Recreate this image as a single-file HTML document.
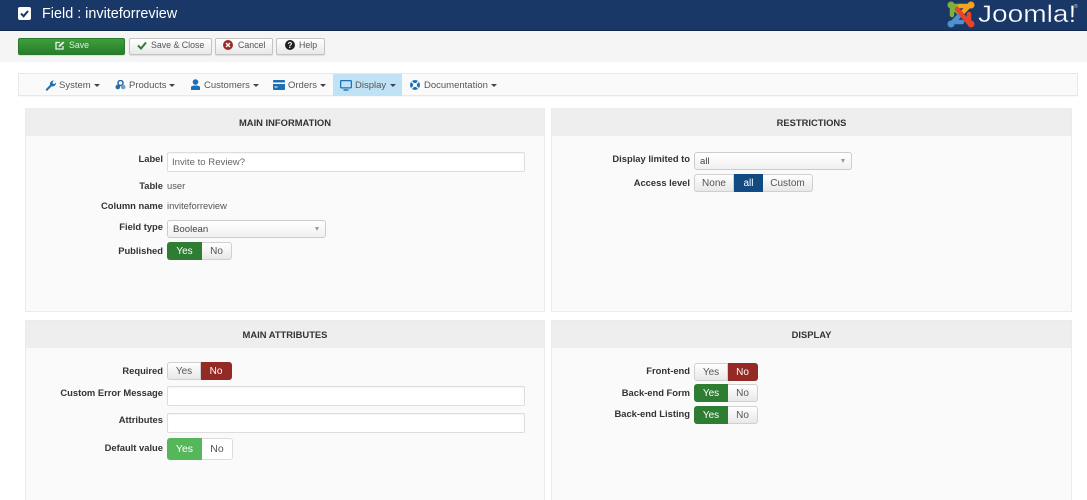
<!DOCTYPE html>
<html><head><meta charset="utf-8"><title>Field : inviteforreview</title>
<style>
html,body{margin:0;padding:0;background:#fff;height:500px;overflow:hidden}
body{width:1087px;position:relative;font-family:"Liberation Sans",sans-serif;font-size:10px;color:#555}
.a{position:absolute;white-space:nowrap}
#hd{left:0;top:0;width:1087px;height:30px;background:#1a3867;border-bottom:1px solid #11294d}
#tb{left:0;top:31px;width:1087px;height:31px;background:#f5f5f5}
.btn{position:absolute;top:38px;height:15px;line-height:15px;border:1px solid #c4c4c4;border-radius:2px;background:linear-gradient(#fff,#e8e8e8);color:#333;font-size:9px;text-align:center;box-shadow:0 1px 1px rgba(0,0,0,.1)}
.bt{position:absolute;top:40px;font-size:8.8px;line-height:11px;color:#555;white-space:nowrap}
#menu{left:18px;top:73px;width:1060px;height:23px;background:#fafafa;border:1px solid #e8e8e8;box-sizing:border-box;box-shadow:0 1px 1px rgba(0,0,0,.04)}
.m{position:absolute;top:80px;font-size:9.5px;line-height:11px;color:#555;white-space:nowrap}
.c{position:absolute;top:84px;width:0;height:0;border-left:3px solid transparent;border-right:3px solid transparent;border-top:3px solid #444}
.ic{position:absolute}
.p{position:absolute;background:#fafafa;border:1px solid #ebebeb;box-sizing:border-box}
.ph{position:absolute;left:0;top:0;right:0;height:27px;background:#eee;text-align:center;line-height:27px;font-size:9.4px;font-weight:bold;color:#333}
.l{position:absolute;font-size:9.4px;font-weight:bold;color:#333;text-align:right;width:160px;line-height:12px;white-space:nowrap}
.t{position:absolute;font-size:9.4px;color:#555;line-height:12px;white-space:nowrap}
.in{position:absolute;left:167px;width:358px;height:20px;box-sizing:border-box;background:#fff;border:1px solid #ddd;border-radius:2px;box-shadow:inset 0 1px 1px rgba(0,0,0,.04);font-size:9.6px;line-height:20px;padding-left:4px;color:#666}
.sel{position:absolute;height:18px;box-sizing:border-box;border:1px solid #ccc;border-radius:3px;background:linear-gradient(#fff,#f0f0f0);font-size:9.6px;line-height:18px;padding-left:5px;color:#444}
.sel:after{content:"";position:absolute;right:6px;top:6px;border-left:2.5px solid transparent;border-right:2.5px solid transparent;border-top:4px solid #999}
.g{position:absolute;height:18px;display:flex;box-sizing:border-box;font-size:10px;line-height:18px;text-align:center}
.g span{display:block;box-sizing:border-box;border:1px solid #d0d0d0;background:linear-gradient(#fff,#e8e8e8);color:#555;height:18px}
.g span:first-child{border-radius:3px 0 0 3px}
.g span:last-child{border-radius:0 3px 3px 0;border-left:0}
.g span.on{border-color:transparent;color:#fff}
.gr{background:#2f7d32!important}.rd{background:#942a25!important}.bl{background:#124a82!important}.lg{background:#55b65a!important}
</style></head><body>
<div class="a" id="hd"></div>
<svg class="ic" style="left:18px;top:7px" width="13" height="13" viewBox="0 0 13 13"><rect width="13" height="13" rx="2" fill="#fff"/><path d="M3 6.500l2.600 2.700L10 4" fill="none" stroke="#1a3867" stroke-width="2"/></svg>
<div class="a" style="left:42px;top:6px;font-size:14.4px;line-height:17px;color:#fff">Field : inviteforreview</div>
<svg class="ic" style="left:947px;top:1px" width="28" height="27" viewBox="0 0 28 27" fill="none" stroke-linecap="round" stroke-width="4.500">
<path d="M6 6l6 6" stroke="#7fb03c"/><path d="M6 5l8 0M5 6l0 8" stroke="#7fb03c"/>
<path d="M22 5l-9 9" stroke="#f5a31d"/><path d="M22 5l-9 0" stroke="#f5a31d"/>
<path d="M6 21l8-8" stroke="#4f91cd"/><path d="M6 21l9 0" stroke="#4f91cd"/>
<path d="M10 8l12 14" stroke="#e8432b"/><path d="M22 21l0-8" stroke="#e8432b"/>
<circle cx="4" cy="4" r="3.500" fill="#7fb03c" stroke="none"/><circle cx="24" cy="4" r="3.500" fill="#f5a31d" stroke="none"/><circle cx="4" cy="23" r="3.500" fill="#4f91cd" stroke="none"/><circle cx="24" cy="23" r="3.500" fill="#e8432b" stroke="none"/></svg>
<div class="a" style="left:978px;top:3px;font-size:24px;line-height:24px;color:#fff;-webkit-text-stroke:.3px #1a3867;transform-origin:0 0;transform:scaleX(1.17)">Joomla!</div>
<div class="a" style="left:1074px;top:4px;font-size:5px;line-height:6px;color:#ccc">®</div>
<div class="a" id="tb"></div>

<div class="btn" style="left:18px;width:105px;background:linear-gradient(#3f9e3a,#287d2b);border-color:#2a7a2c"></div>
<svg class="ic" style="left:55px;top:41px" width="10" height="9" viewBox="0 0 10 9"><path d="M8 5v3H1V1.500h4" fill="none" stroke="#e8f3e8" stroke-width="1.300"/><path d="M3.500 6l.4-1.800L8 0.500l1.400 1.300-4 3.700z" fill="#e8f3e8"/></svg>
<div class="bt" style="left:69px;color:#dcefdc">Save</div>
<div class="btn" style="left:129px;width:81px"></div>
<svg class="ic" style="left:137px;top:41px" width="10" height="9" viewBox="0 0 10 9"><path d="M1 4.500l3 3L9 1.500" fill="none" stroke="#2f7d32" stroke-width="2"/></svg>
<div class="bt" style="left:151px">Save &amp; Close</div>
<div class="btn" style="left:215px;width:56px"></div>
<svg class="ic" style="left:223px;top:40px" width="10" height="10" viewBox="0 0 10 10"><circle cx="5" cy="5" r="5" fill="#9c2a25"/><path d="M3 3l4 4M7 3l-4 4" stroke="#fff" stroke-width="1.400"/></svg>
<div class="bt" style="left:238px">Cancel</div>
<div class="btn" style="left:276px;width:47px"></div>
<svg class="ic" style="left:285px;top:40px" width="10" height="10" viewBox="0 0 10 10"><circle cx="5" cy="5" r="5" fill="#222"/><text x="5" y="8" text-anchor="middle" font-size="8" font-weight="bold" fill="#fff" font-family="Liberation Sans">?</text></svg>
<div class="bt" style="left:299px">Help</div>

<div class="a" id="menu"></div>
<div class="a" style="left:333px;top:74px;width:69px;height:22px;background:#bfe2f5"></div>
<svg class="ic" style="left:45px;top:80px" width="11" height="11" viewBox="0 0 11 11"><path d="M0.500 9.500L5 5c-.6-2 .8-4.500 4-4.500L7.500 2.200l.4 1.400 1.400.4L11 2.500c0 3-2 4.400-4.300 3.800L2 11z" fill="#1f6fb5"/></svg>
<div class="m" style="left:59px">System</div><div class="c" style="left:94px"></div>
<svg class="ic" style="left:115px;top:80px" width="11" height="10" viewBox="0 0 11 10"><circle cx="5.500" cy="3" r="2.500" fill="none" stroke="#2b6aa3" stroke-width="1.600"/><circle cx="2.800" cy="7" r="2.300" fill="#2b6aa3"/><circle cx="8.200" cy="7" r="2.300" fill="#6f9fca"/></svg>
<div class="m" style="left:129px">Products</div><div class="c" style="left:169px"></div>
<svg class="ic" style="left:190px;top:79px" width="11" height="12" viewBox="0 0 11 12" fill="#1f6fb5"><circle cx="5.500" cy="3" r="2.800"/><path d="M1 11V8.500C1 7 2.500 6.500 5.500 6.500S10 7 10 8.500V11z"/></svg>
<div class="m" style="left:204px">Customers</div><div class="c" style="left:253px"></div>
<svg class="ic" style="left:273px;top:80px" width="12" height="10" viewBox="0 0 12 10"><rect width="12" height="10" rx="1" fill="#1f6fb5"/><rect y="2.500" width="12" height="1.500" fill="#fff"/><rect x="1.500" y="6.500" width="3" height="1" fill="#fff"/></svg>
<div class="m" style="left:288px">Orders</div><div class="c" style="left:320px"></div>
<svg class="ic" style="left:340px;top:80px" width="12" height="11" viewBox="0 0 12 11"><rect x=".6" y=".6" width="10.800" height="7.300" rx="1" fill="none" stroke="#1f6fb5" stroke-width="1.300"/><path d="M3.500 10h5" stroke="#1f6fb5" stroke-width="1.400"/></svg>
<div class="m" style="left:355px">Display</div><div class="c" style="left:390px"></div>
<svg class="ic" style="left:410px;top:80px" width="10" height="10" viewBox="0 0 10 10"><circle cx="5" cy="5" r="5" fill="#1f6fb5"/><circle cx="5" cy="5" r="2" fill="#fff"/><path d="M1.500 1.500l2 2M8.500 1.500l-2 2M1.500 8.500l2-2M8.500 8.500l-2-2" stroke="#fff" stroke-width="1.300"/></svg>
<div class="m" style="left:424px">Documentation</div><div class="c" style="left:491px"></div>

<div class="p" style="left:25px;top:108px;width:520px;height:204px"><div class="ph">MAIN INFORMATION</div></div>
<div class="p" style="left:551px;top:108px;width:521px;height:204px"><div class="ph">RESTRICTIONS</div></div>
<div class="p" style="left:25px;top:320px;width:520px;height:180px;border-bottom:0"><div class="ph">MAIN ATTRIBUTES</div></div>
<div class="p" style="left:551px;top:320px;width:521px;height:180px;border-bottom:0"><div class="ph">DISPLAY</div></div>

<div class="l" style="left:3px;top:153px">Label</div>
<div class="in" style="top:152px">Invite to Review?</div>
<div class="l" style="left:3px;top:180px">Table</div><div class="t" style="left:167px;top:180px">user</div>
<div class="l" style="left:3px;top:200px">Column name</div><div class="t" style="left:167px;top:200px">inviteforreview</div>
<div class="l" style="left:3px;top:221px">Field type</div>
<div class="sel" style="left:167px;top:220px;width:159px">Boolean</div>
<div class="l" style="left:3px;top:245px">Published</div>
<div class="g" style="left:167px;top:242px"><span class="on gr" style="width:35px">Yes</span><span style="width:30px">No</span></div>

<div class="l" style="left:3px;top:365px">Required</div>
<div class="g" style="left:167px;top:362px"><span style="width:34px">Yes</span><span class="on rd" style="width:31px">No</span></div>
<div class="l" style="left:3px;top:387px">Custom Error Message</div>
<div class="in" style="top:386px"></div>
<div class="l" style="left:3px;top:414px">Attributes</div>
<div class="in" style="top:413px"></div>
<div class="l" style="left:3px;top:442px">Default value</div>
<div class="g" style="left:167px;top:438px;height:22px;line-height:21px;font-size:10.500px"><span class="on lg" style="width:35px;height:22px">Yes</span><span style="width:31px;height:22px;background:#fff;border:1px solid #ddd;border-left:0">No</span></div>

<div class="l" style="left:530px;top:153px">Display limited to</div>
<div class="sel" style="left:694px;top:152px;width:158px">all</div>
<div class="l" style="left:530px;top:177px">Access level</div>
<div class="g" style="left:694px;top:174px"><span style="width:40px">None</span><span class="on bl" style="width:29px;border-radius:0">all</span><span style="width:50px">Custom</span></div>

<div class="l" style="left:530px;top:365px">Front-end</div>
<div class="g" style="left:694px;top:363px"><span style="width:34px">Yes</span><span class="on rd" style="width:30px">No</span></div>
<div class="l" style="left:530px;top:387px">Back-end Form</div>
<div class="g" style="left:694px;top:384px"><span class="on gr" style="width:34px">Yes</span><span style="width:30px">No</span></div>
<div class="l" style="left:530px;top:408px">Back-end Listing</div>
<div class="g" style="left:694px;top:406px"><span class="on gr" style="width:34px">Yes</span><span style="width:30px">No</span></div>
</body></html>
